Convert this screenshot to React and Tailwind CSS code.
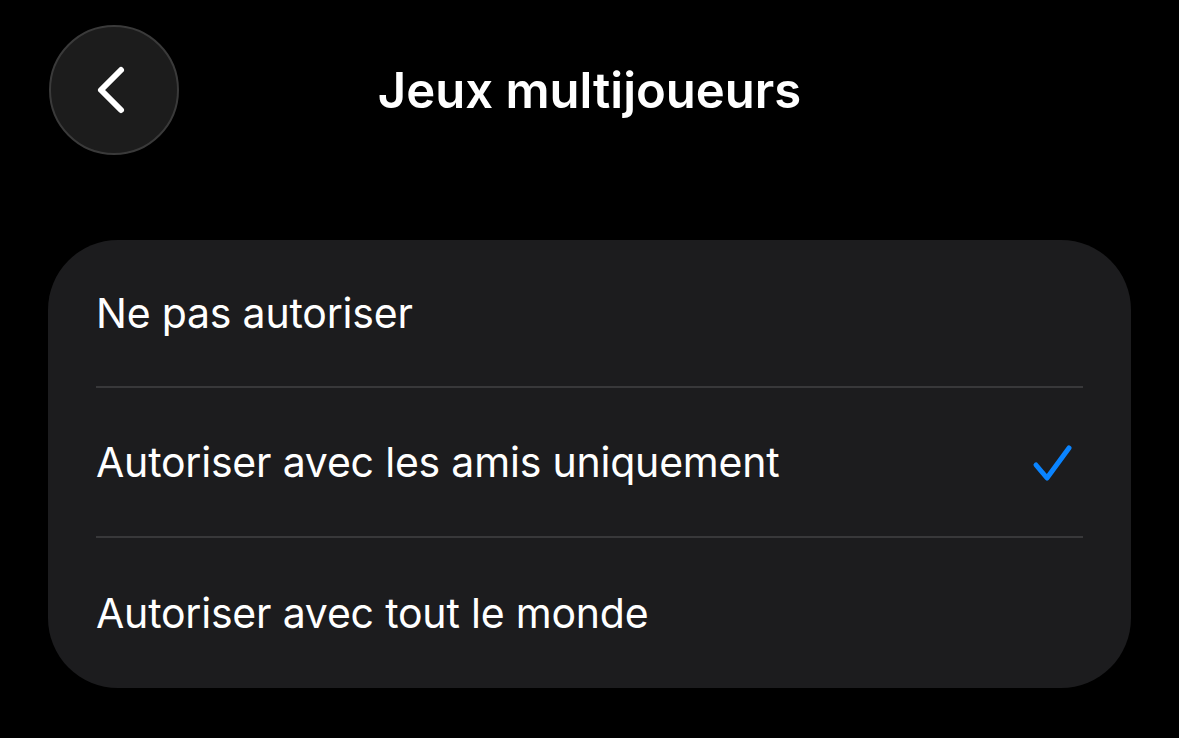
export default function App() {
  const options = [
    { label: "Ne pas autoriser", selected: false, h: "h-[148px]" },
    { label: "Autoriser avec les amis uniquement", selected: true, h: "h-[150px]" },
    { label: "Autoriser avec tout le monde", selected: false, h: "h-[150px]" },
  ];

  return (
    <div
      className="w-[1179px] h-[738px] bg-black text-white overflow-hidden"
      style={{ fontFamily: "Inter, 'Noto Sans', sans-serif" }}
    >
      {/* Header */}
      <div className="relative h-[240px]">
        <button className="absolute left-[49px] top-[25px] w-[130px] h-[130px] rounded-full bg-[#1c1c1c] border-2 border-[#3a3a3a] flex items-center justify-center">
          <svg width="40" height="52" viewBox="0 0 40 52" fill="none">
            <path
              d="M27 6 L7 26 L27 46"
              stroke="white"
              strokeWidth="6"
              strokeLinecap="round"
              strokeLinejoin="round"
            />
          </svg>
        </button>
        <div className="pt-[59px] text-center text-[49px] font-semibold leading-[64px]">
          Jeux multijoueurs
        </div>
      </div>

      {/* Options */}
      <div className="mx-[48px] w-[1083px] rounded-[70px] bg-[#1c1c1e] overflow-hidden">
        {options.map((opt, i) => (
          <div key={opt.label} className="px-[48px]">
            <div
              className={
                opt.h +
                " flex items-center justify-between " +
                (i < options.length - 1 ? "border-b-2 border-[#38383a]" : "")
              }
            >
              <span className="text-[41px] leading-none tracking-[-0.2px]">{opt.label}</span>
              {opt.selected && (
                <svg width="44" height="44" viewBox="0 0 44 44" fill="none" className="mr-[8px]">
                  <path
                    d="M5 25 L16 38 L38 8"
                    stroke="#0a84ff"
                    strokeWidth="5"
                    strokeLinecap="round"
                    strokeLinejoin="round"
                  />
                </svg>
              )}
            </div>
          </div>
        ))}
      </div>
    </div>
  );
}
